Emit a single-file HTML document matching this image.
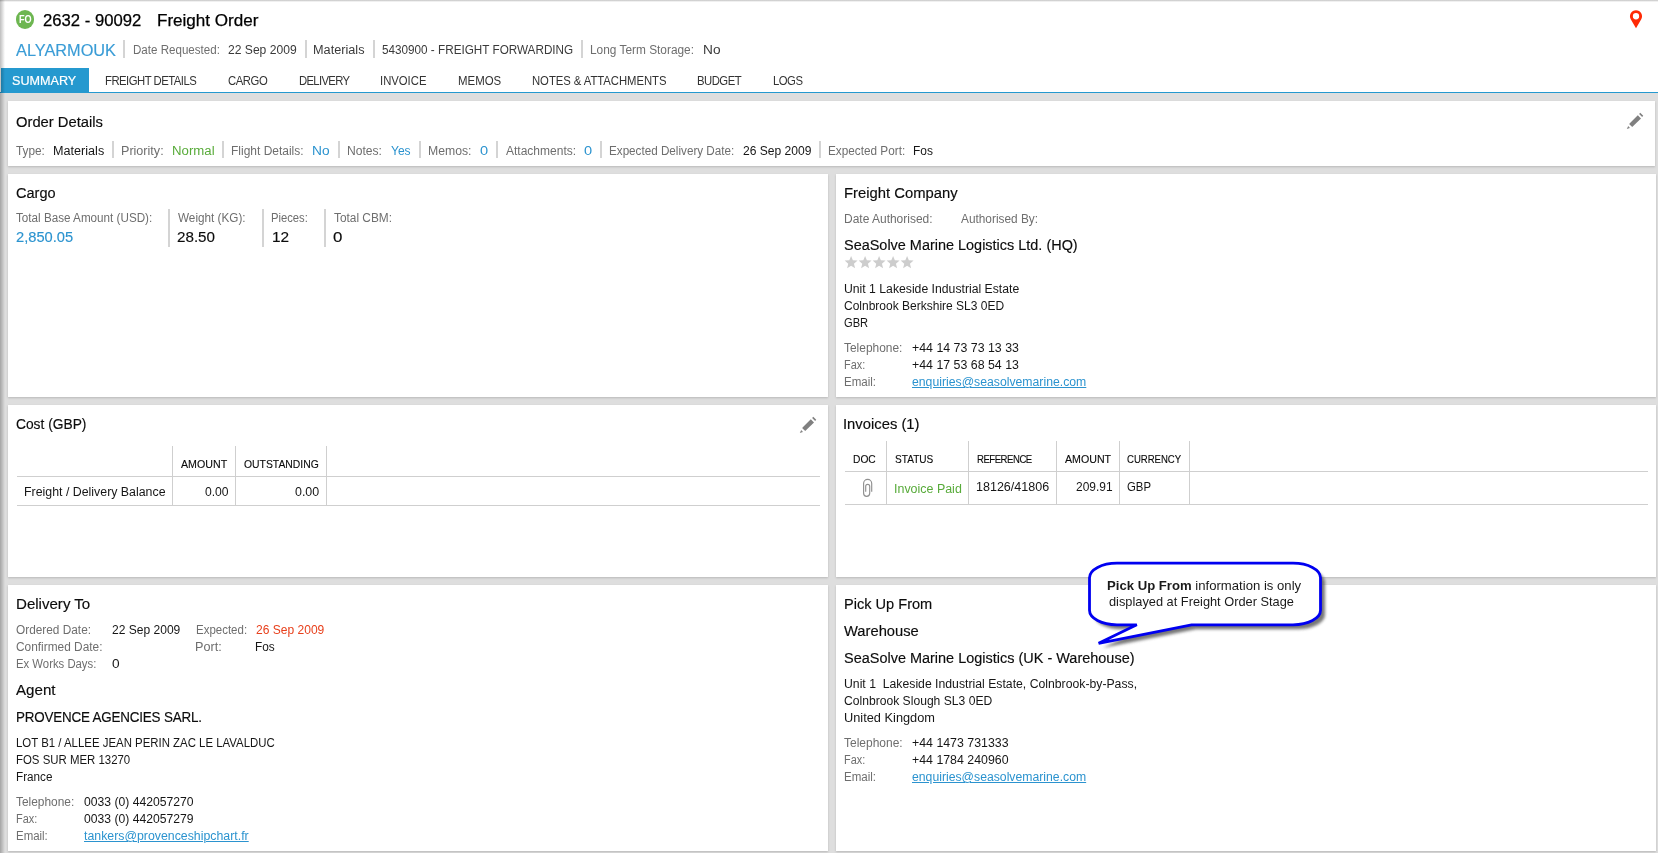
<!DOCTYPE html>
<html lang="en">
<head>
<meta charset="utf-8">
<title>2632 - 90092 Freight Order</title>
<style>
html,body{margin:0;padding:0;background:#dedede}
#page{position:relative;width:1658px;height:853px;overflow:hidden;background:#dedede;font-family:"Liberation Sans", sans-serif;}
.panel{position:absolute;background:#fff;box-shadow:0 1px 2px rgba(0,0,0,.17)}
#hdr{box-shadow:none} #callout{background:none;box-shadow:none}
.t{position:absolute;transform-origin:0 0;white-space:pre;line-height:20px;height:20px;margin:0;font-weight:400}
.hd{-webkit-text-stroke:0.16px currentColor}
.lnk{text-decoration:underline;text-decoration-thickness:1px;text-underline-offset:1px}
</style>
</head>
<body>
<div id="page">
<header class="panel" id="hdr" style="left:0px;top:0px;width:1658px;height:93px">
<i class="deco" style="position:absolute;left:1px;top:68px;width:88px;height:24px;background:#2599cf"></i>
<i class="deco" style="position:absolute;left:0;top:92px;width:1658px;height:1px;background:#2599cf"></i>
<span class="deco" style="position:absolute;left:16.3px;top:10.4px;width:18.2px;height:18.2px;border-radius:50%;background:#6db651;"></span>
<i class="deco" style="position:absolute;left:123px;top:40px;width:2px;height:18px;background:#d4d4d4"></i>
<i class="deco" style="position:absolute;left:305px;top:40px;width:2px;height:18px;background:#d4d4d4"></i>
<i class="deco" style="position:absolute;left:373px;top:40px;width:2px;height:18px;background:#d4d4d4"></i>
<i class="deco" style="position:absolute;left:581px;top:40px;width:2px;height:18px;background:#d4d4d4"></i>
<svg class="deco" style="position:absolute;left:1616px;top:4px" width="40" height="30" viewBox="0 0 40 30"><path fill-rule="evenodd" fill="#ff2a05" d="M20 24.2 L14.75 15.3 A6.05 6.05 0 1 1 25.25 15.3 Z M20 9.1 A3.15 3.15 0 1 0 20 15.4 A3.15 3.15 0 1 0 20 9.1 Z"/></svg>
<span class="t" id="t0" style="left:42.97px;top:11px;font-size:16px;color:#000;font-weight:500;-webkit-text-stroke:0.25px #000;transform:scaleX(1.0423);">2632 - 90092</span>
<span class="t" id="t1" style="left:157.25px;top:11px;font-size:16px;color:#000;-webkit-text-stroke:0.25px #000;transform:scaleX(1.0658);">Freight Order</span>
<span class="t" id="t2" style="left:19.29px;top:9px;font-size:10.5px;color:#fff;font-weight:700;z-index:2;transform:scaleX(0.8702);">FO</span>
<span class="t" id="t3" style="left:16.00px;top:41px;font-size:16px;color:#3a9cd6;-webkit-text-stroke:0.15px #3a9cd6;transform:scaleX(1.0191);">ALYARMOUK</span>
<span class="t" id="t4" style="left:132.72px;top:40px;font-size:12px;color:#6e6e6e;transform:scaleX(0.9649);">Date Requested:</span>
<span class="t" id="t5" style="left:228.02px;top:40px;font-size:12px;color:#3a3a3a;transform:scaleX(1.0084);">22 Sep 2009</span>
<span class="t" id="t6" style="left:313.16px;top:40px;font-size:12px;color:#3a3a3a;transform:scaleX(1.0580);">Materials</span>
<span class="t" id="t7" style="left:382.42px;top:40px;font-size:12px;color:#3a3a3a;transform:scaleX(0.9763);">5430900 - FREIGHT FORWARDING</span>
<span class="t" id="t8" style="left:589.91px;top:40px;font-size:12px;color:#6e6e6e;transform:scaleX(0.9889);">Long Term Storage:</span>
<span class="t" id="t9" style="left:703.00px;top:40px;font-size:12px;color:#3a3a3a;transform:scaleX(1.1405);">No</span>
<span class="t" id="t10" style="left:12.21px;top:71px;font-size:13px;color:#fff;-webkit-text-stroke:0.2px #fff;transform:scaleX(0.9709);">SUMMARY</span>
<span class="t" id="t11" style="left:105.19px;top:71px;font-size:13px;color:#333;letter-spacing:-0.58px;transform:scaleX(0.8700);">FREIGHT DETAILS</span>
<span class="t" id="t12" style="left:228.39px;top:71px;font-size:13px;color:#333;letter-spacing:-0.51px;transform:scaleX(0.8700);">CARGO</span>
<span class="t" id="t13" style="left:299.19px;top:71px;font-size:13px;color:#333;letter-spacing:-0.78px;transform:scaleX(0.8700);">DELIVERY</span>
<span class="t" id="t14" style="left:380.24px;top:71px;font-size:13px;color:#333;letter-spacing:-0.01px;transform:scaleX(0.8700);">INVOICE</span>
<span class="t" id="t15" style="left:458.18px;top:71px;font-size:13px;color:#333;transform:scaleX(0.8794);">MEMOS</span>
<span class="t" id="t16" style="left:532.29px;top:71px;font-size:13px;color:#333;letter-spacing:-0.05px;transform:scaleX(0.8700);">NOTES &amp; ATTACHMENTS</span>
<span class="t" id="t17" style="left:697.06px;top:71px;font-size:13px;color:#333;letter-spacing:-0.58px;transform:scaleX(0.8700);">BUDGET</span>
<span class="t" id="t18" style="left:773.25px;top:71px;font-size:13px;color:#333;letter-spacing:-0.57px;transform:scaleX(0.8700);">LOGS</span>
</header>
<section class="panel" id="order" style="left:8px;top:101px;width:1647px;height:65px">
<span class="t hd" id="t19" style="left:8.00px;top:11px;font-size:15.4px;color:#0c0c0c;transform:scaleX(0.9596);">Order Details</span>
<span class="t" id="t20" style="left:8.00px;top:40px;font-size:12px;color:#6e6e6e;transform:scaleX(0.9844);">Type:</span>
<span class="t" id="t21" style="left:45.33px;top:40px;font-size:12px;color:#161616;transform:scaleX(1.0520);">Materials</span>
<span class="t" id="t22" style="left:113.16px;top:40px;font-size:12px;color:#6e6e6e;transform:scaleX(1.0483);">Priority:</span>
<span class="t" id="t23" style="left:164.47px;top:40px;font-size:12px;color:#58ab3a;transform:scaleX(1.1010);">Normal</span>
<span class="t" id="t24" style="left:222.96px;top:40px;font-size:12px;color:#6e6e6e;transform:scaleX(0.9984);">Flight Details:</span>
<span class="t" id="t25" style="left:303.66px;top:40px;font-size:12px;color:#2b93cf;transform:scaleX(1.1453);">No</span>
<span class="t" id="t26" style="left:339.21px;top:40px;font-size:12px;color:#6e6e6e;transform:scaleX(1.0088);">Notes:</span>
<span class="t" id="t27" style="left:382.71px;top:40px;font-size:12px;color:#2b93cf;transform:scaleX(1.0030);">Yes</span>
<span class="t" id="t28" style="left:420.01px;top:40px;font-size:12px;color:#6e6e6e;transform:scaleX(1.0193);">Memos:</span>
<span class="t" id="t29" style="left:472.13px;top:40px;font-size:12px;color:#2b93cf;transform:scaleX(1.2167);">0</span>
<span class="t" id="t30" style="left:497.71px;top:40px;font-size:12px;color:#6e6e6e;transform:scaleX(1.0004);">Attachments:</span>
<span class="t" id="t31" style="left:576.13px;top:40px;font-size:12px;color:#2b93cf;transform:scaleX(1.2167);">0</span>
<span class="t" id="t32" style="left:601.41px;top:40px;font-size:12px;color:#6e6e6e;transform:scaleX(0.9732);">Expected Delivery Date:</span>
<span class="t" id="t33" style="left:734.56px;top:40px;font-size:12px;color:#161616;transform:scaleX(1.0059);">26 Sep 2009</span>
<span class="t" id="t34" style="left:820.26px;top:40px;font-size:12px;color:#6e6e6e;transform:scaleX(0.9807);">Expected Port:</span>
<span class="t" id="t35" style="left:905.10px;top:40px;font-size:12px;color:#161616;transform:scaleX(0.9958);">Fos</span>
<i class="deco" style="position:absolute;left:104px;top:40px;width:2px;height:17px;background:#d4d4d4"></i>
<i class="deco" style="position:absolute;left:214px;top:40px;width:2px;height:17px;background:#d4d4d4"></i>
<i class="deco" style="position:absolute;left:330px;top:40px;width:2px;height:17px;background:#d4d4d4"></i>
<i class="deco" style="position:absolute;left:411px;top:40px;width:2px;height:17px;background:#d4d4d4"></i>
<i class="deco" style="position:absolute;left:488px;top:40px;width:2px;height:17px;background:#d4d4d4"></i>
<i class="deco" style="position:absolute;left:592px;top:40px;width:2px;height:17px;background:#d4d4d4"></i>
<i class="deco" style="position:absolute;left:811px;top:40px;width:2px;height:17px;background:#d4d4d4"></i>
<svg class="deco" style="position:absolute;left:1608px;top:5px" width="40" height="30" viewBox="0 0 40 30"><polygon points="21.8,9.2 25.0,12.4 16.2,21.0 13.1,17.9" fill="#808080"/><line x1="23.7" y1="7.4" x2="26.7" y2="10.3" stroke="#808080" stroke-width="1.6"/><polygon points="10.8,23.0 12.2,20.1 14.0,21.9" fill="#858585"/></svg>
</section>
<section class="panel" id="cargo" style="left:8px;top:174px;width:820px;height:223px">
<span class="t hd" id="t36" style="left:8.00px;top:9px;font-size:15.4px;color:#0c0c0c;transform:scaleX(0.9445);">Cargo</span>
<span class="t" id="t37" style="left:8.00px;top:34px;font-size:12px;color:#6e6e6e;transform:scaleX(0.9727);">Total Base Amount (USD):</span>
<span class="t hd" id="t38" style="left:8.00px;top:53px;font-size:15.4px;color:#2b93cf;transform:scaleX(0.9528);">2,850.05</span>
<span class="t" id="t39" style="left:169.89px;top:34px;font-size:12px;color:#6e6e6e;transform:scaleX(0.9778);">Weight (KG):</span>
<span class="t hd" id="t40" style="left:169.08px;top:53px;font-size:15.4px;color:#0c0c0c;transform:scaleX(0.9869);">28.50</span>
<span class="t" id="t41" style="left:263.21px;top:34px;font-size:12px;color:#6e6e6e;transform:scaleX(0.9361);">Pieces:</span>
<span class="t hd" id="t42" style="left:263.70px;top:53px;font-size:15.4px;color:#0c0c0c;transform:scaleX(1.0004);">12</span>
<span class="t" id="t43" style="left:325.85px;top:34px;font-size:12px;color:#6e6e6e;transform:scaleX(0.9883);">Total CBM:</span>
<span class="t hd" id="t44" style="left:325.30px;top:53px;font-size:15.4px;color:#0c0c0c;transform:scaleX(1.0978);">0</span>
<i class="deco" style="position:absolute;left:160px;top:35px;width:2px;height:38px;background:#d4d4d4"></i>
<i class="deco" style="position:absolute;left:254px;top:35px;width:2px;height:38px;background:#d4d4d4"></i>
<i class="deco" style="position:absolute;left:316px;top:35px;width:2px;height:38px;background:#d4d4d4"></i>
</section>
<section class="panel" id="freight" style="left:836px;top:174px;width:820px;height:223px">
<span class="t hd" id="t45" style="left:8.00px;top:9px;font-size:15.4px;color:#0c0c0c;transform:scaleX(0.9624);">Freight Company</span>
<span class="t" id="t46" style="left:8.00px;top:35px;font-size:12px;color:#6e6e6e;transform:scaleX(0.9984);">Date Authorised:</span>
<span class="t" id="t47" style="left:124.95px;top:35px;font-size:12px;color:#6e6e6e;transform:scaleX(0.9866);">Authorised By:</span>
<span class="t hd" id="t48" style="left:8.00px;top:61px;font-size:15.4px;color:#0c0c0c;transform:scaleX(0.9388);">SeaSolve Marine Logistics Ltd. (HQ)</span>
<span class="t" id="t49" style="left:8.00px;top:105px;font-size:12px;color:#161616;transform:scaleX(1.0180);">Unit 1 Lakeside Industrial Estate</span>
<span class="t" id="t50" style="left:8.00px;top:122px;font-size:12px;color:#161616;transform:scaleX(1.0004);">Colnbrook Berkshire SL3 0ED</span>
<span class="t" id="t51" style="left:8.00px;top:139px;font-size:12px;color:#161616;transform:scaleX(0.9274);">GBR</span>
<span class="t" id="t52" style="left:8.00px;top:164px;font-size:12px;color:#6e6e6e;transform:scaleX(0.9944);">Telephone:</span>
<span class="t" id="t53" style="left:76.36px;top:164px;font-size:12px;color:#161616;transform:scaleX(1.0303);">+44 14 73 73 13 33</span>
<span class="t" id="t54" style="left:8.00px;top:181px;font-size:12px;color:#6e6e6e;transform:scaleX(0.9064);">Fax:</span>
<span class="t" id="t55" style="left:76.36px;top:181px;font-size:12px;color:#161616;transform:scaleX(1.0303);">+44 17 53 68 54 13</span>
<span class="t" id="t56" style="left:8.00px;top:198px;font-size:12px;color:#6e6e6e;transform:scaleX(0.9617);">Email:</span>
<span class="t lnk" id="t57" style="left:75.65px;top:198px;font-size:12px;color:#2b93cf;transform:scaleX(1.0197);">enquiries@seasolvemarine.com</span>
<svg class="deco" style="position:absolute;left:0;top:80px" width="90" height="18" viewBox="836 254 90 18"><polygon fill="#cdcdcd" points="851.10,255.90 852.86,260.27 857.57,260.60 853.95,263.63 855.10,268.20 851.10,265.70 847.10,268.20 848.25,263.63 844.63,260.60 849.34,260.27"/><polygon fill="#cdcdcd" points="865.10,255.90 866.86,260.27 871.57,260.60 867.95,263.63 869.10,268.20 865.10,265.70 861.10,268.20 862.25,263.63 858.63,260.60 863.34,260.27"/><polygon fill="#cdcdcd" points="879.10,255.90 880.86,260.27 885.57,260.60 881.95,263.63 883.10,268.20 879.10,265.70 875.10,268.20 876.25,263.63 872.63,260.60 877.34,260.27"/><polygon fill="#cdcdcd" points="893.10,255.90 894.86,260.27 899.57,260.60 895.95,263.63 897.10,268.20 893.10,265.70 889.10,268.20 890.25,263.63 886.63,260.60 891.34,260.27"/><polygon fill="#cdcdcd" points="907.10,255.90 908.86,260.27 913.57,260.60 909.95,263.63 911.10,268.20 907.10,265.70 903.10,268.20 904.25,263.63 900.63,260.60 905.34,260.27"/></svg>
</section>
<section class="panel" id="cost" style="left:8px;top:405px;width:820px;height:172px">
<span class="t hd" id="t58" style="left:8.00px;top:9px;font-size:15.4px;color:#0c0c0c;transform:scaleX(0.8956);">Cost (GBP)</span>
<span class="t" id="t59" style="left:172.77px;top:49px;font-size:11px;color:#0a0a0a;-webkit-text-stroke:0.12px #0a0a0a;transform:scaleX(0.9679);">AMOUNT</span>
<span class="t" id="t60" style="left:235.54px;top:49px;font-size:11px;color:#0a0a0a;-webkit-text-stroke:0.12px #0a0a0a;transform:scaleX(0.9438);">OUTSTANDING</span>
<span class="t" id="t61" style="left:16.06px;top:77px;font-size:12px;color:#161616;transform:scaleX(1.0303);">Freight / Delivery Balance</span>
<span class="t" id="t62" style="left:196.96px;top:77px;font-size:12px;color:#161616;transform:scaleX(1.0113);">0.00</span>
<span class="t" id="t63" style="left:287.37px;top:77px;font-size:12px;color:#161616;transform:scaleX(1.0360);">0.00</span>
<i class="deco" style="position:absolute;left:9px;top:71px;width:803px;height:1px;background:#cfcfcf"></i>
<i class="deco" style="position:absolute;left:9px;top:100px;width:803px;height:1px;background:#cfcfcf"></i>
<i class="deco" style="position:absolute;left:164px;top:41px;width:1px;height:60px;background:#cfcfcf"></i>
<i class="deco" style="position:absolute;left:227px;top:41px;width:1px;height:60px;background:#cfcfcf"></i>
<i class="deco" style="position:absolute;left:318px;top:41px;width:1px;height:60px;background:#cfcfcf"></i>
<svg class="deco" style="position:absolute;left:781px;top:5px" width="40" height="30" viewBox="0 0 40 30"><polygon points="21.8,9.2 25.0,12.4 16.2,21.0 13.1,17.9" fill="#808080"/><line x1="23.7" y1="7.4" x2="26.7" y2="10.3" stroke="#808080" stroke-width="1.6"/><polygon points="10.8,23.0 12.2,20.1 14.0,21.9" fill="#858585"/></svg>
</section>
<section class="panel" id="inv" style="left:836px;top:405px;width:820px;height:172px">
<span class="t hd" id="t64" style="left:6.74px;top:9px;font-size:15.4px;color:#0c0c0c;transform:scaleX(0.9620);">Invoices (1)</span>
<span class="t" id="t65" style="left:16.70px;top:44px;font-size:11px;color:#0a0a0a;-webkit-text-stroke:0.12px #0a0a0a;transform:scaleX(0.9299);">DOC</span>
<span class="t" id="t66" style="left:58.84px;top:44px;font-size:11px;color:#0a0a0a;-webkit-text-stroke:0.12px #0a0a0a;transform:scaleX(0.9174);">STATUS</span>
<span class="t" id="t67" style="left:140.71px;top:44px;font-size:11px;color:#0a0a0a;-webkit-text-stroke:0.12px #0a0a0a;letter-spacing:-0.55px;transform:scaleX(0.8700);">REFERENCE</span>
<span class="t" id="t68" style="left:228.57px;top:44px;font-size:11px;color:#0a0a0a;-webkit-text-stroke:0.12px #0a0a0a;transform:scaleX(0.9666);">AMOUNT</span>
<span class="t" id="t69" style="left:291.49px;top:44px;font-size:11px;color:#0a0a0a;-webkit-text-stroke:0.12px #0a0a0a;letter-spacing:-0.02px;transform:scaleX(0.8700);">CURRENCY</span>
<span class="t" id="t70" style="left:58.07px;top:74px;font-size:12px;color:#58ab3a;transform:scaleX(1.0371);">Invoice Paid</span>
<span class="t" id="t71" style="left:140.32px;top:72px;font-size:12px;color:#161616;transform:scaleX(1.0436);">18126/41806</span>
<span class="t" id="t72" style="left:239.70px;top:72px;font-size:12px;color:#161616;transform:scaleX(0.9950);">209.91</span>
<span class="t" id="t73" style="left:291.44px;top:72px;font-size:12px;color:#161616;transform:scaleX(0.9470);">GBP</span>
<i class="deco" style="position:absolute;left:9px;top:66px;width:803px;height:1px;background:#cfcfcf"></i>
<i class="deco" style="position:absolute;left:9px;top:99px;width:803px;height:1px;background:#cfcfcf"></i>
<i class="deco" style="position:absolute;left:50px;top:36px;width:1px;height:64px;background:#cfcfcf"></i>
<i class="deco" style="position:absolute;left:132px;top:36px;width:1px;height:64px;background:#cfcfcf"></i>
<i class="deco" style="position:absolute;left:220px;top:36px;width:1px;height:64px;background:#cfcfcf"></i>
<i class="deco" style="position:absolute;left:283px;top:36px;width:1px;height:64px;background:#cfcfcf"></i>
<i class="deco" style="position:absolute;left:353px;top:36px;width:1px;height:64px;background:#cfcfcf"></i>
<svg class="deco" style="position:absolute;left:16px;top:67px" width="30" height="30" viewBox="0 0 30 30"><path fill="none" stroke="#909090" stroke-width="1.15" d="M19.7 19.7V11.45A4.05 4.05 0 0 0 11.6 11.45V21.35A3.05 3.05 0 0 0 17.7 21.35V14.3A2 2 0 0 0 13.7 14.3V19.7"/></svg>
</section>
<section class="panel" id="deliv" style="left:8px;top:585px;width:820px;height:266px">
<span class="t hd" id="t74" style="left:8.00px;top:9px;font-size:15.4px;color:#0c0c0c;transform:scaleX(0.9791);">Delivery To</span>
<span class="t" id="t75" style="left:8.00px;top:35px;font-size:12px;color:#6e6e6e;transform:scaleX(0.9868);">Ordered Date:</span>
<span class="t" id="t76" style="left:104.08px;top:35px;font-size:12px;color:#161616;transform:scaleX(1.0033);">22 Sep 2009</span>
<span class="t" id="t77" style="left:187.83px;top:35px;font-size:12px;color:#6e6e6e;transform:scaleX(0.9574);">Expected:</span>
<span class="t" id="t78" style="left:248.08px;top:35px;font-size:12px;color:#e8401c;transform:scaleX(1.0033);">26 Sep 2009</span>
<span class="t" id="t79" style="left:8.00px;top:52px;font-size:12px;color:#6e6e6e;transform:scaleX(0.9894);">Confirmed Date:</span>
<span class="t" id="t80" style="left:187.04px;top:52px;font-size:12px;color:#6e6e6e;transform:scaleX(1.0532);">Port:</span>
<span class="t" id="t81" style="left:247.23px;top:52px;font-size:12px;color:#161616;transform:scaleX(0.9872);">Fos</span>
<span class="t" id="t82" style="left:8.00px;top:69px;font-size:12px;color:#6e6e6e;transform:scaleX(0.9436);">Ex Works Days:</span>
<span class="t" id="t83" style="left:103.69px;top:69px;font-size:12px;color:#161616;transform:scaleX(1.1387);">0</span>
<span class="t hd" id="t84" style="left:8.00px;top:95px;font-size:15.4px;color:#0c0c0c;transform:scaleX(0.9822);">Agent</span>
<span class="t hd" id="t85" style="left:8.00px;top:122px;font-size:15.4px;color:#0c0c0c;letter-spacing:-0.20px;transform:scaleX(0.8700);">PROVENCE AGENCIES SARL.</span>
<span class="t" id="t86" style="left:8.00px;top:148px;font-size:12px;color:#161616;transform:scaleX(0.9511);">LOT B1 / ALLEE JEAN PERIN ZAC LE LAVALDUC</span>
<span class="t" id="t87" style="left:8.00px;top:165px;font-size:12px;color:#161616;transform:scaleX(0.9511);">FOS SUR MER 13270</span>
<span class="t" id="t88" style="left:8.00px;top:182px;font-size:12px;color:#161616;transform:scaleX(0.9759);">France</span>
<span class="t" id="t89" style="left:8.00px;top:207px;font-size:12px;color:#6e6e6e;transform:scaleX(0.9931);">Telephone:</span>
<span class="t" id="t90" style="left:76.02px;top:207px;font-size:12px;color:#161616;transform:scaleX(1.0141);">0033 (0) 442057270</span>
<span class="t" id="t91" style="left:8.00px;top:224px;font-size:12px;color:#6e6e6e;transform:scaleX(0.9123);">Fax:</span>
<span class="t" id="t92" style="left:75.75px;top:224px;font-size:12px;color:#161616;transform:scaleX(1.0128);">0033 (0) 442057279</span>
<span class="t" id="t93" style="left:8.00px;top:241px;font-size:12px;color:#6e6e6e;transform:scaleX(0.9538);">Email:</span>
<span class="t lnk" id="t94" style="left:75.69px;top:241px;font-size:12px;color:#2b93cf;transform:scaleX(1.0278);">tankers@provenceshipchart.fr</span>
</section>
<section class="panel" id="pick" style="left:836px;top:585px;width:820px;height:266px">
<span class="t hd" id="t95" style="left:8.00px;top:9px;font-size:15.4px;color:#0c0c0c;transform:scaleX(0.9469);">Pick Up From</span>
<span class="t hd" id="t96" style="left:8.00px;top:36px;font-size:15.4px;color:#0c0c0c;transform:scaleX(0.9572);">Warehouse</span>
<span class="t hd" id="t97" style="left:8.00px;top:63px;font-size:15.4px;color:#0c0c0c;transform:scaleX(0.9399);">SeaSolve Marine Logistics (UK - Warehouse)</span>
<span class="t" id="t98" style="left:8.00px;top:89px;font-size:12px;color:#161616;transform:scaleX(1.0194);">Unit 1  Lakeside Industrial Estate, Colnbrook-by-Pass,</span>
<span class="t" id="t99" style="left:8.00px;top:106px;font-size:12px;color:#161616;transform:scaleX(1.0101);">Colnbrook Slough SL3 0ED</span>
<span class="t" id="t100" style="left:8.00px;top:123px;font-size:12px;color:#161616;transform:scaleX(1.0658);">United Kingdom</span>
<span class="t" id="t101" style="left:8.00px;top:148px;font-size:12px;color:#6e6e6e;transform:scaleX(0.9983);">Telephone:</span>
<span class="t" id="t102" style="left:76.08px;top:148px;font-size:12px;color:#161616;transform:scaleX(1.0292);">+44 1473 731333</span>
<span class="t" id="t103" style="left:8.00px;top:165px;font-size:12px;color:#6e6e6e;transform:scaleX(0.9082);">Fax:</span>
<span class="t" id="t104" style="left:76.48px;top:165px;font-size:12px;color:#161616;transform:scaleX(1.0292);">+44 1784 240960</span>
<span class="t" id="t105" style="left:8.00px;top:182px;font-size:12px;color:#6e6e6e;transform:scaleX(0.9623);">Email:</span>
<span class="t lnk" id="t106" style="left:75.97px;top:182px;font-size:12px;color:#2b93cf;transform:scaleX(1.0188);">enquiries@seasolvemarine.com</span>
</section>
<section class="panel" id="callout" style="left:1080px;top:550px;width:260px;height:110px">
<svg class="deco" style="position:absolute;left:0;top:0" width="260" height="110" viewBox="1080 550 260 110"><defs><filter id="bs" x="-10%" y="-20%" width="125%" height="150%"><feGaussianBlur stdDeviation="1.6"/></filter></defs><path d="M1117 563.2 H1293 A27.5 14.5 0 0 1 1320.5 577.7 V610.3 A27.5 14.5 0 0 1 1293 624.8 H1191.5 L1098.6 643.3 L1136.8 624.8 H1117 A27.5 14.5 0 0 1 1089.5 610.3 V577.7 A27.5 14.5 0 0 1 1117 563.2 Z" transform="translate(4.5,4.5)" fill="#555" opacity=".8" filter="url(#bs)"/><path d="M1117 563.2 H1293 A27.5 14.5 0 0 1 1320.5 577.7 V610.3 A27.5 14.5 0 0 1 1293 624.8 H1191.5 L1098.6 643.3 L1136.8 624.8 H1117 A27.5 14.5 0 0 1 1089.5 610.3 V577.7 A27.5 14.5 0 0 1 1117 563.2 Z" fill="#fff" stroke="#0000f0" stroke-width="2.8" stroke-linejoin="miter"/></svg>
<span class="t" id="t107" style="left:26.90px;top:26px;font-size:12.67px;color:#1a1a1a;transform:scaleX(1.0375);"><b>Pick Up From</b> information is only</span>
<span class="t" id="t108" style="left:29.19px;top:42px;font-size:12.67px;color:#1a1a1a;transform:scaleX(1.0110);">displayed at Freight Order Stage</span>
</section>
<i class="deco" style="position:absolute;left:0;top:0;width:5px;height:853px;background:linear-gradient(to right,rgba(0,0,0,.26),rgba(0,0,0,0))"></i>
<i class="deco" style="position:absolute;left:0;top:0;width:1658px;height:2px;background:linear-gradient(to bottom,rgba(0,0,0,.24),rgba(0,0,0,0))"></i>
</div>
</body>
</html>
